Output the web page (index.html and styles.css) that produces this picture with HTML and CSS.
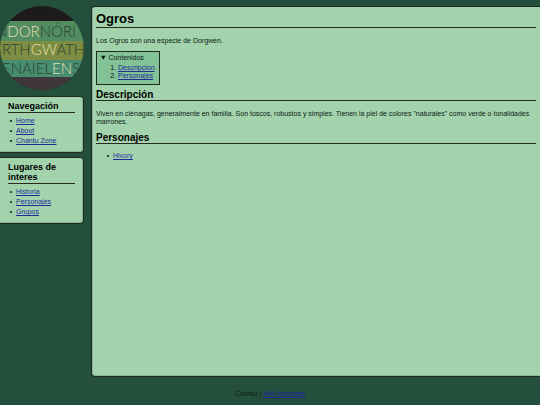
FILE: index.html
```
<!DOCTYPE html>
<html lang="es">
<head>
    <meta charset="UTF-8">
    <meta name="viewport" content="width=device-width, initial-scale=1.0">
    <title>Ogros</title>
    <link rel="stylesheet" href="styles.css">
</head>
<body>
    <div class="page">
        <aside class="sidebar">
            <svg class="logo" viewBox="0 0 84 84" role="img" aria-label="Dorgwen">
                <defs>
                    <clipPath id="round"><circle cx="42" cy="42" r="42"/></clipPath>
                </defs>
                <g clip-path="url(#round)">
                    <rect width="84" height="84" fill="#1d1a1c"/>
                    <rect y="15" width="84" height="21" fill="#528c61"/>
                    <rect y="35" width="84" height="20" fill="#7d8e43"/>
                    <rect y="54" width="84" height="18" fill="#478d70"/>
                    <rect y="71" width="84" height="13" fill="#40373c"/>
                    <g class="logo-text">
                        <text x="-4" y="31">N<tspan class="lit">DOR</tspan>NÓRI</text>
                        <text x="2" y="49">RTH<tspan class="lit">GW</tspan>ATH</text>
                        <text x="2" y="68">ENAIEL<tspan class="lit">EN</tspan>S</text>
                    </g>
                </g>
            </svg>
            <nav class="box">
                <h3>Navegación</h3>
                <ul>
                    <li><a href="#">Home</a></li>
                    <li><a href="#">About</a></li>
                    <li><a href="#">Chantu Zone</a></li>
                </ul>
            </nav>
            <nav class="box">
                <h3>Lugares de interes</h3>
                <ul>
                    <li><a href="#">Historia</a></li>
                    <li><a href="#">Personajes</a></li>
                    <li><a href="#">Grupos</a></li>
                </ul>
            </nav>
        </aside>
        <main class="content">
            <h1>Ogros</h1>
            <p>Los Ogros son una especie de Dorgwen.</p>
            <details class="toc" open>
                <summary>Contenidos</summary>
                <ol>
                    <li><a href="#descripcion">Descripcion</a></li>
                    <li><a href="#personajes">Personajes</a></li>
                </ol>
            </details>
            <h2 id="descripcion">Descripción</h2>
            <p>Viven en ciénagas, generalmente en familia. Son toscos, robustos y simples. Tienen la piel de colores "naturales" como verde o tonalidades marrones.</p>
            <h2 id="personajes">Personajes</h2>
            <ul>
                <li><a href="#">Hivory</a></li>
            </ul>
        </main>
    </div>
    <footer>Chantu | <a href="#">Wiki template</a></footer>
</body>
</html>
```
FILE: styles.css
```
* {
    box-sizing: border-box;
}

body {
    display: flex;
    flex-direction: column;
    min-height: 100vh;
    margin: 0;
    background-color: #244f3d;
    color: #0c2114;
    font-family: Arial, "Liberation Sans", sans-serif;
    font-size: 7px;
    line-height: 8px;
}

a {
    color: #1c2c98;
}

h1, h2, h3 {
    margin: 0;
    color: #000;
    border-bottom: 1px solid #2a2a1e;
}

p {
    margin: 9px 0 6px;
}

ul {
    list-style-type: "•\00a0\00a0";
}

.page {
    display: flex;
    flex: 1;
    gap: 7px;
    padding-top: 6px;
}

.sidebar {
    flex: 0 0 84px;
}

.logo {
    display: block;
    width: 100%;
    margin-bottom: 6px;
}

.logo-text {
    font-family: Lato, sans-serif;
    font-size: 15px;
    font-weight: 300;
    fill: #2c4030;
}

.lit {
    fill: #e6dfb2;
}

.box {
    margin-bottom: 4px;
    padding: 4px 8px 6px;
    background-color: #a2d3ac;
    border: 1px solid #1c2a20;
    border-left: none;
    border-radius: 0 4px 4px 0;
    box-shadow: inset -1px -1px 0 #8fb297;
}

.box h3 {
    padding-bottom: 1px;
    font-size: 9px;
    line-height: 10px;
}

.box ul {
    margin: 3px 0 0;
    padding-left: 8px;
    line-height: 10px;
}

.content {
    flex: 1;
    padding: 4px 4px 8px;
    background-color: #a2d3ac;
    border: 1px solid #1c2a20;
    border-right: none;
    border-radius: 4px 0 0 4px;
    box-shadow: inset 1px -1px 0 #8fb297;
}

.content h1 {
    font-size: 13px;
    line-height: 16px;
}

.content h2 {
    font-size: 10px;
    line-height: 11px;
}

.content ul {
    margin: 8px 0;
    padding-left: 17px;
}

.toc {
    width: fit-content;
    margin-bottom: 4px;
    padding: 2px 4px 4px;
    background-color: #83c196;
    border: 1px solid #1c2a20;
}

.toc ol {
    margin: 2px 0 0;
    padding-left: 17px;
}

footer {
    padding: 13px 0 7px;
    text-align: center;
}
```
